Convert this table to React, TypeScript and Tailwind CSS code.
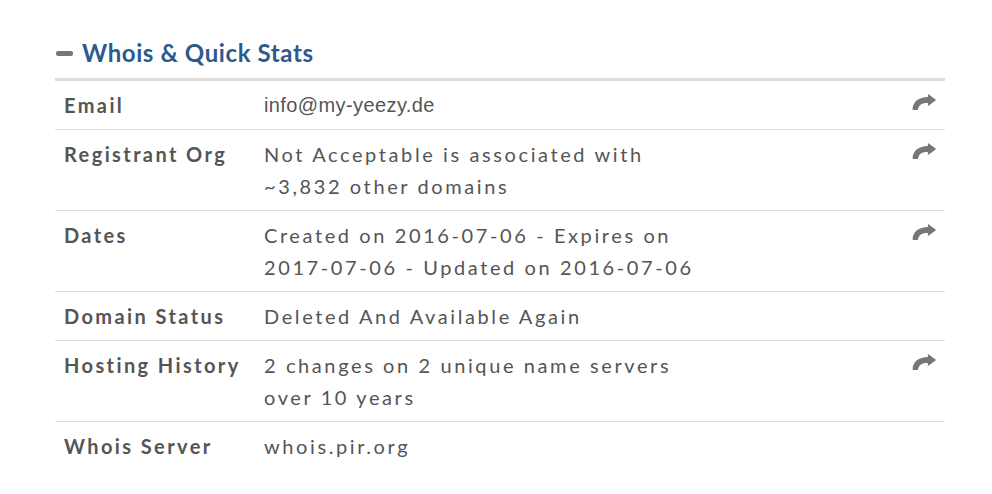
interface Row {
  label: string;
  value: string;
  link?: boolean;
  mono?: boolean;
}

const rows: Row[] = [
  { label: "Email", value: "info@my-yeezy.de", link: true, mono: true },
  {
    label: "Registrant Org",
    value: "Not Acceptable is associated with ~3,832 other domains",
    link: true,
  },
  {
    label: "Dates",
    value: "Created on 2016-07-06 - Expires on 2017-07-06 - Updated on 2016-07-06",
    link: true,
  },
  { label: "Domain Status", value: "Deleted And Available Again" },
  {
    label: "Hosting History",
    value: "2 changes on 2 unique name servers over 10 years",
    link: true,
  },
  { label: "Whois Server", value: "whois.pir.org" },
];

function ShareIcon() {
  return (
    <svg viewBox="0 0 24 16" className="ml-auto mt-[5px] h-[16px] w-[24px]">
      <path
        d="M16.4 0.3 L23.6 5.6 Q24 6 23.6 6.4 L16.4 11.7 Q15.9 12 15.9 11.4 V9 C10.6 8.9 7.2 10.2 6 15.4 Q5.9 16 5.3 16 H1.2 Q0.6 16 0.6 15.3 C0.9 7.4 6.6 3.1 15.9 2.9 V0.6 Q15.9 0 16.4 0.3 Z"
        fill="#777"
      />
    </svg>
  );
}

export default function App() {
  return (
    <div className="min-h-[494px] w-[992px] bg-white font-['Lato',sans-serif] text-[#555]">
      <div className="ml-[55px] w-[890px] pt-[37px]">

        <div className="flex items-center">
          <span className="mr-[9px] ml-[1px] h-[5px] w-[17px] rounded-[2px] bg-[#777]" />
          <h2 className="text-[24px] font-bold leading-[32px] tracking-[0.6px] text-[#2c5a8c]">
            Whois &amp; Quick Stats
          </h2>
        </div>

        <div className="mt-[9px] h-[3px] bg-[#ddd]" />

        <table className="w-full border-collapse">
          <tbody>
            {rows.map((row, i) => (
              <tr
                key={row.label}
                className={i < rows.length - 1 ? "border-b border-[#ddd]" : ""}
              >
                <td className="w-[201px] px-[9px] py-[8px] align-top text-[20px] font-bold leading-[32px] tracking-[2.4px]">
                  {row.label}
                </td>

                <td className="w-[456px] px-[8px] py-[8px] align-top">
                  {row.mono ? (
                    <span className="font-['Liberation_Sans',sans-serif] text-[20px] leading-[32px] tracking-[0.4px]">
                      {row.value}
                    </span>
                  ) : (
                    <div className="max-w-[440px] text-[20px] leading-[32px] tracking-[2.6px]">
                      {row.value}
                    </div>
                  )}
                </td>

                <td className="px-[9px] py-[8px] text-right align-top">
                  {row.link && <ShareIcon />}
                </td>
              </tr>
            ))}
          </tbody>
        </table>

      </div>
    </div>
  );
}
